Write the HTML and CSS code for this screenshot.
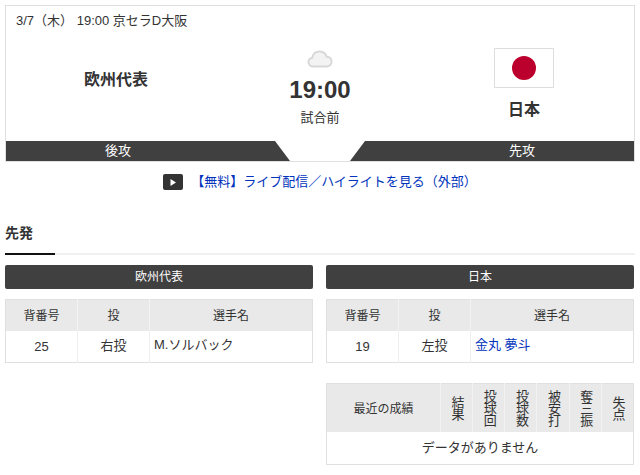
FILE: index.html
```html
<!DOCTYPE html>
<html lang="ja">
<head>
    <meta charset="UTF-8">
    <title>欧州代表 vs 日本</title>
    <link rel="stylesheet" href="styles.css">
</head>
<body>
    <section class="score-card">
        <p class="game-info">3/7（木） 19:00 京セラD大阪</p>
        <div class="teams">
            <div class="team team-left">
                <span class="team-name">欧州代表</span>
            </div>
            <div class="status">
                <svg class="cloud" width="26" height="18" viewBox="0 0 26 18">
                    <path d="M6.5 16.5C3.4 16.5 1.5 14.5 1.5 12C1.5 9.7 3 8.1 5.2 7.7C6 4 8.8 1.5 12.6 1.5C16.2 1.5 18.8 3.6 19.7 6.8C22.6 7 24.5 9 24.5 11.7C24.5 14.5 22.5 16.5 19.8 16.5Z" fill="#f3f3f3" stroke="#d8d8d8" stroke-width="2"/>
                </svg>
                <div class="time">19:00</div>
                <div class="state">試合前</div>
            </div>
            <div class="team team-right">
                <div class="flag"><span class="flag-sun"></span></div>
                <span class="team-name">日本</span>
            </div>
        </div>
        <div class="order-bar">
            <div class="order order-left">後攻</div>
            <div class="order order-right">先攻</div>
        </div>
    </section>

    <p class="live-link">
        <span class="play"><svg width="6" height="7" viewBox="0 0 6 7"><path d="M0.5 0L6 3.5L0.5 7Z" fill="#fff"/></svg></span>
        <a href="#">【無料】ライブ配信／ハイライトを見る（外部）</a>
    </p>

    <h2 class="section-title"><span>先発</span></h2>

    <div class="columns">
        <div class="column">
            <div class="team-head">欧州代表</div>
            <table class="grid starter">
                <tr><th class="c-num">背番号</th><th class="c-hand">投</th><th>選手名</th></tr>
                <tr><td class="uniform">25</td><td>右投</td><td class="player">M.ソルバック</td></tr>
            </table>
        </div>
        <div class="column">
            <div class="team-head">日本</div>
            <table class="grid starter">
                <tr><th class="c-num">背番号</th><th class="c-hand">投</th><th>選手名</th></tr>
                <tr><td class="uniform">19</td><td>左投</td><td class="player"><a href="#">金丸 夢斗</a></td></tr>
            </table>
            <table class="grid recent">
                <tr>
                    <th class="c-recent">最近の成績</th>
                    <th><span class="tall">結果</span></th>
                    <th><span class="tall">投球回</span></th>
                    <th><span class="tall">投球数</span></th>
                    <th><span class="tall">被安打</span></th>
                    <th><span class="tall">奪三振</span></th>
                    <th><span class="tall">失点</span></th>
                </tr>
                <tr><td colspan="7">データがありません</td></tr>
            </table>
        </div>
    </div>
</body>
</html>
```

FILE: styles.css
```css
* {
    margin: 0;
    padding: 0;
    box-sizing: border-box;
}

html, body {
    background-color: #fff;
    overflow: hidden;
}

body {
    width: 640px;
    height: 475px;
    padding: 5px 5px 0;
    font-family: "Liberation Sans", "Noto Sans CJK JP", sans-serif;
    font-size: 13px;
    color: #333;
}

a {
    color: #0033bb;
    text-decoration: none;
}

/* スコア部分 */
.score-card {
    width: 630px;
    height: 157px;
    border: 1px solid #e0e0e0;
    display: flex;
    flex-direction: column;
}

.game-info {
    height: 28px;
    padding: 6px 0 0 10px;
    line-height: 18px;
}

.teams {
    flex: 1;
    display: flex;
}

.team {
    width: 220px;
    display: flex;
    flex-direction: column;
    align-items: center;
}

.team-left {
    padding-top: 34px;
}

.team-right {
    padding-top: 14px;
}

.team-name {
    font-size: 16px;
    font-weight: bold;
    line-height: 24px;
}

.flag {
    width: 60px;
    height: 40px;
    border: 1px solid #ddd;
    display: flex;
    align-items: center;
    justify-content: center;
    margin-bottom: 10px;
}

.flag-sun {
    width: 24px;
    height: 24px;
    border-radius: 50%;
    background-color: #bc002d;
}

.status {
    flex: 1;
    display: flex;
    flex-direction: column;
    align-items: center;
    padding-top: 16px;
}

.cloud {
    display: block;
}

.time {
    font-size: 24px;
    font-weight: bold;
    line-height: 28px;
    margin-top: 8px;
}

.state {
    line-height: 18px;
    margin-top: 5px;
}

.order-bar {
    height: 20px;
    display: flex;
    justify-content: space-between;
}

.order {
    background-color: #404040;
    color: #fff;
    line-height: 20px;
    text-align: center;
}

.order-left {
    width: 284px;
    clip-path: polygon(0 0, 269px 0, 100% 100%, 0 100%);
    padding-right: 60px;
}

.order-right {
    width: 284px;
    clip-path: polygon(15px 0, 100% 0, 100% 100%, 0 100%);
    padding-left: 60px;
}

/* 配信リンク */
.live-link {
    height: 40px;
    display: flex;
    align-items: center;
    justify-content: center;
    gap: 8px;
    margin-bottom: 17px;
}

.live-link a {
    padding-bottom: 3px;
}

.play {
    width: 20px;
    height: 16px;
    border-radius: 2px;
    background-color: #333;
    display: flex;
    align-items: center;
    justify-content: center;
}

.play svg {
    display: block;
}

/* 先発 */
.section-title {
    height: 36px;
    border-bottom: 2px solid #f0f0f0;
    font-size: 14px;
    line-height: 20px;
    margin-bottom: 10px;
}

.section-title span {
    display: block;
    width: 50px;
    height: 36px;
    padding-top: 4px;
    border-bottom: 2px solid #111;
}

.columns {
    display: flex;
    gap: 13px;
}

.column {
    width: 308px;
}

.team-head {
    height: 24px;
    border-radius: 2px;
    background-color: #404040;
    color: #fff;
    font-size: 12px;
    line-height: 24px;
    text-align: center;
    margin-bottom: 10px;
}

.grid {
    width: 100%;
    border-collapse: collapse;
    table-layout: fixed;
    border: 1px solid #e0e0e0;
}

.grid th {
    background-color: #e9e9e9;
    font-size: 12px;
    font-weight: normal;
    border-left: 1px solid #f2f2f2;
    text-align: center;
}

.grid td {
    border-left: 1px solid #eeeeee;
    text-align: center;
    padding-bottom: 3px;
}

.grid th:first-child,
.grid td:first-child {
    border-left: 0;
}

.starter th {
    height: 31px;
    padding-bottom: 2px;
}

.starter td {
    height: 32px;
}

.starter td.uniform {
    padding-bottom: 0;
}

.c-num,
.c-hand {
    width: 72px;
}

.starter td.player {
    text-align: left;
    padding-left: 4px;
    padding-bottom: 5px;
}

.recent {
    margin-top: 20px;
}

.recent th {
    height: 48px;
}

.recent td {
    height: 33px;
}

.c-recent {
    width: 114px;
}

/* 縦書きの見出し */
.tall {
    display: inline-block;
    writing-mode: vertical-rl;
    text-orientation: upright;
    font-size: 13px;
    letter-spacing: -1px;
    line-height: 16px;
    vertical-align: middle;
}
```
